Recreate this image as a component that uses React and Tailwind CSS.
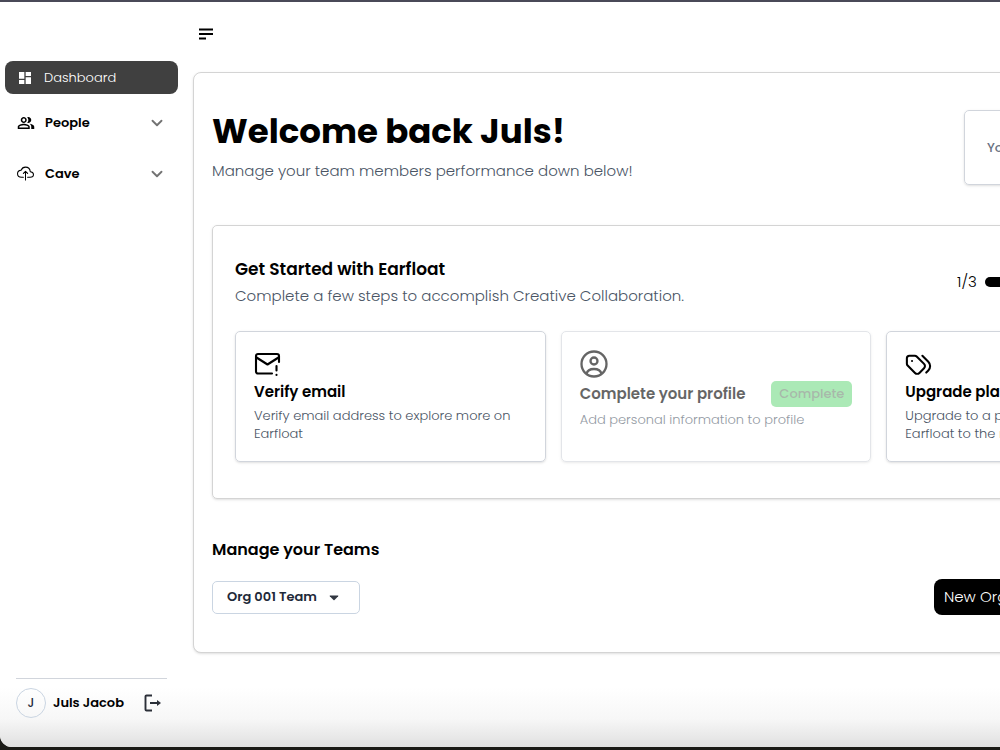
import { MdDashboard, MdOutlinePeopleAlt } from "react-icons/md";
import { TbTags } from "react-icons/tb";
import { IoCloudUploadOutline } from "react-icons/io5";
import { ChevronDown } from "lucide-react";

function MenuIcon() {
    return (
        <svg width="16" height="14" viewBox="0 0 16 14" stroke="black" strokeWidth="1.8" aria-hidden="true">
            <path d="M1 2.500h14M1 7h14M1 11.500h7" />
        </svg>
    );
}

function MailAlertIcon() {
    return (
        <svg width="28" height="26" viewBox="0 0 28 26" fill="none" stroke="black" strokeWidth="2.1" strokeLinecap="round" strokeLinejoin="round" aria-hidden="true">
            <path d="M18 22.500H4a2 2 0 0 1-2-2V5a2 2 0 0 1 2-2h19a2 2 0 0 1 2 2v6" />
            <path d="M2.500 6.500l11 7 11-7" />
            <path d="M22.500 15v4.500M22.500 23.800v.1" />
        </svg>
    );
}

function UserCircleIcon() {
    return (
        <svg width="28" height="28" viewBox="0 0 28 28" fill="none" stroke="black" strokeWidth="2.3" aria-hidden="true">
            <circle cx="14" cy="14" r="12.5" />
            <circle cx="14" cy="11" r="3.5" />
            <path d="M6.500 24c.8-3.500 3.500-5 7.500-5s6.700 1.500 7.500 5" />
        </svg>
    );
}

function LogoutIcon() {
    return (
        <svg width="18" height="18" viewBox="0 0 18 18" fill="none" stroke="#2b2f38" strokeWidth="1.9" aria-hidden="true">
            <path d="M8 1.500H2.500a1 1 0 0 0-1 1v13a1 1 0 0 0 1 1H8" />
            <path d="M6 9h8" />
            <path d="M13 6l4 3-4 3z" fill="#2b2f38" stroke="none" />
        </svg>
    );
}

function NavGroup({ icon, label }) {
    return (
        <button type="button" className="flex h-[51px] w-full items-center pl-3 pr-3 text-[13px] font-semibold">
            <span className="flex w-7">{icon}</span>
            {label}
            <ChevronDown size={18} strokeWidth={2.5} className="ml-auto text-neutral-500" />
        </button>
    );
}

function Sidebar() {
    return (
        <aside className="flex w-[184px] shrink-0 flex-col pl-[5px] pr-1.5 pt-[59px] pb-[29px]">
            <nav>
                <a href="#dashboard" className="flex h-[33px] items-center rounded-lg bg-[#404040] pl-3 text-[13px] font-light text-white">
                    <span className="flex w-[27px]"><MdDashboard size={16} /></span>
                    Dashboard
                </a>
                <div className="mt-[3px]">
                    <NavGroup icon={<MdOutlinePeopleAlt size={18} />} label="People" />
                    <NavGroup icon={<IoCloudUploadOutline size={17} />} label="Cave" />
                </div>
            </nav>
            <div className="mt-auto ml-[11px] mr-[11px] flex items-center border-t border-gray-300 pt-[9px]">
                <span className="flex size-[30px] items-center justify-center rounded-full border border-slate-300 text-xs font-medium text-gray-800">J</span>
                <span className="ml-[7px] text-[13px] font-semibold">Juls Jacob</span>
                <button type="button" aria-label="Log out" className="ml-auto mr-[5px]"><LogoutIcon /></button>
            </div>
        </aside>
    );
}

function StepCard({ icon, title, text, done }) {
    return (
        <div className={done ? "h-[131px] rounded-[5px] border border-gray-300 px-[18px] pt-[17px] opacity-60 shadow-sm" : "h-[131px] rounded-[5px] border border-gray-300 px-[18px] pt-[17px] shadow-sm"}>
            <div className="flex h-[29px] items-center">{icon}</div>
            <div className="mt-[3px] flex items-center justify-between">
                <h3 className="text-[15px] leading-[22px] font-semibold">{title}</h3>
                {done && <span className="rounded-[5px] bg-[#74dc86] px-2 text-[13px] leading-[26px] font-medium text-[#6f8a73]">Complete</span>}
            </div>
            <p className="mt-1 text-[13px] leading-[18px] font-light text-gray-600">{text}</p>
        </div>
    );
}

function App() {
    return (
        <div className="flex min-h-screen overflow-hidden bg-[#1b1b17] pb-[3px] font-['Poppins','Inter',sans-serif] text-black">
            <div className="flex grow overflow-hidden rounded-bl-xl border-t-2 border-[#4a4a58] bg-white bg-[linear-gradient(to_top,#e0e0e0,#f7f7f7_28px,#ffffff_60px)]">
                <Sidebar />
                <main className="min-w-[1056px] grow pl-[9px] pr-4">
                    <header className="flex h-[70px] pt-6 pl-[5px]">
                        <button type="button" aria-label="Toggle menu" className="h-4"><MenuIcon /></button>
                    </header>
                    <section className="w-[1046px] rounded-lg border border-neutral-300 bg-white px-[18px] py-[37px] shadow-sm">
                        <div className="flex justify-between">
                            <div>
                                <h1 className="text-[34px] leading-[42px] font-bold">Welcome back Juls!</h1>
                                <p className="mt-[7px] text-[15px] leading-6 font-light text-gray-600">Manage your team members performance down below!</p>
                            </div>
                            <div className="flex h-[75px] w-64 items-center rounded-[5px] border border-gray-300 px-[22px] text-[13px] font-medium text-gray-500 shadow-sm">Your current plan</div>
                        </div>

                        <div className="mt-10 rounded-[5px] border border-neutral-300 px-[22px] pt-[29px] pb-9 shadow-sm">
                            <div className="flex items-center justify-between">
                                <div>
                                    <h2 className="text-[17px] leading-7 font-semibold">Get Started with Earfloat</h2>
                                    <p className="text-[15px] leading-[26px] font-light text-gray-600">Complete a few steps to accomplish Creative Collaboration.</p>
                                </div>
                                <div className="flex w-60 items-center gap-2 text-[15px] font-light">
                                    1/3
                                    <div className="h-2.5 grow rounded-full bg-gray-200">
                                        <div className="h-2.5 w-1/3 rounded-full bg-black"></div>
                                    </div>
                                </div>
                            </div>
                            <div className="mt-[22px] grid grid-cols-3 gap-[15px]">
                                <StepCard icon={<MailAlertIcon />} title="Verify email" text="Verify email address to explore more on Earfloat" />
                                <StepCard icon={<UserCircleIcon />} title="Complete your profile" text="Add personal information to profile" done />
                                <StepCard icon={<TbTags size={31} strokeWidth={1.6} className="-ml-0.5" />} title="Upgrade plan" text={<>Upgrade to a premium plan to take<br />Earfloat to the next level</>} />
                            </div>
                        </div>

                        <h2 className="mt-[39px] text-base leading-6 font-semibold">Manage your Teams</h2>
                        <div className="mt-[17px] flex items-center justify-between">
                            <div className="relative">
                                <select aria-label="Team" className="h-[33px] w-[148px] appearance-none rounded-[5px] border border-slate-300 bg-white pl-3.5 text-[13px] font-semibold text-gray-800">
                                    <option>Org 001 Team</option>
                                </select>
                                <svg className="pointer-events-none absolute top-3.5 right-[21px]" width="10" height="6" viewBox="0 0 10 6" fill="#333842" aria-hidden="true">
                                    <path d="M1 .5h8q.6.2.2.800L5.500 5q-.5.4-1 0L.8 1.300Q.4.7 1 .5z" />
                                </svg>
                            </div>
                            <div className="flex w-[286px] justify-between">
                                <button type="button" className="h-9 rounded-lg bg-black px-2.5 text-[15px] font-light text-white">New Organization</button>
                            </div>
                        </div>
                    </section>
                </main>
            </div>
        </div>
    );
}

export default App;
